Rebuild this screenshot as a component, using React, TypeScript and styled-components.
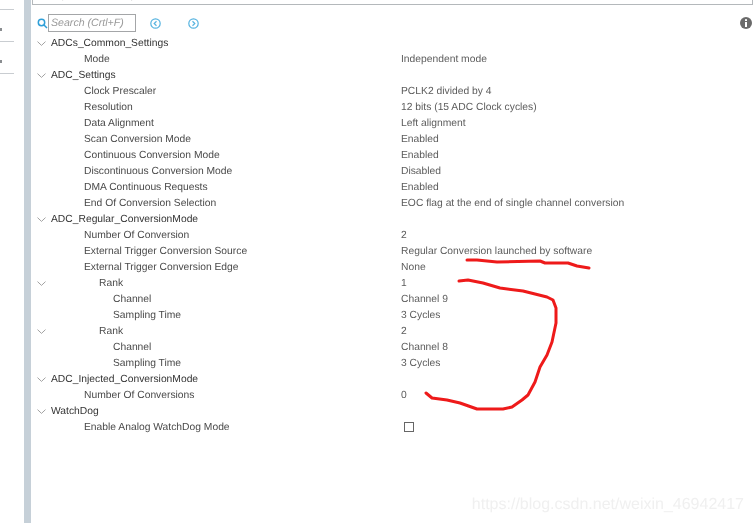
import React from "react";
import styled, { createGlobalStyle } from "styled-components";

const Global = createGlobalStyle`
  html, body { margin: 0; padding: 0; background: #fff; }
  #root { width: 753px; height: 523px; overflow: hidden; }
`;

const Page = styled.div`
  position: relative;
  display: flex;
  width: 753px;
  height: 523px;
  overflow: hidden;
  background: #fff;
  font-family: "Liberation Sans", Arial, sans-serif;
  font-size: 10.3px;
  text-rendering: geometricPrecision;
  color: #4a4a4a;
  filter: blur(0.3px);
`;

const Side = styled.div`
  width: 24px;
  flex: none;
  display: flex;
  flex-direction: column;
  padding-top: 9px;
`;

const SideCell = styled.div<{ $first?: boolean }>`
  width: 14px;
  height: 31px;
  border-top: ${(p) => (p.$first ? "1px solid #c9cdd1" : "0")};
  border-bottom: 1px solid #c9cdd1;
  display: flex;
  align-items: center;
`;

const Dot = styled.span`
  width: 2px;
  height: 3px;
  margin-top: 7px;
  background: #8a8d90;
`;

const Divider = styled.div`
  width: 7px;
  flex: none;
  background: #c6d0d8;
`;

const Main = styled.div`
  flex: 1;
  min-width: 0;
  display: flex;
  flex-direction: column;
`;

const Header = styled.div`
  height: 5px;
  margin-left: 1px;
  border: 1px solid #b4b8bb;
  border-top: 0;
  box-sizing: border-box;
  overflow: hidden;
  color: #8a8a8a;
  line-height: 12px;
`;

const HeaderText = styled.div`
  margin-top: -10px;
  padding-left: 3px;
  white-space: nowrap;
`;

const SearchBar = styled.div`
  display: flex;
  align-items: center;
  height: 18px;
  margin-top: 9px;
  padding-left: 6px;
  position: relative;
`;

const SearchBox = styled.div`
  width: 88px;
  height: 18px;
  box-sizing: border-box;
  border: 1px solid #a4a6a8;
  color: #9a9a9a;
  font-style: italic;
  font-size: 10.6px;
  line-height: 16px;
  padding-left: 2px;
`;

const NavButton = styled.svg<{ $gap: number }>`
  width: 11px;
  height: 11px;
  margin-left: ${(p) => p.$gap}px;
  flex: none;
`;

const InfoIcon = styled.svg`
  position: absolute;
  left: 709px;
  top: 3px;
  width: 12px;
  height: 12px;
`;

const Tree = styled.div`
  display: flex;
  flex-direction: column;
  margin-top: 4px;
`;

const RowLine = styled.div`
  height: 16px;
  display: flex;
  align-items: center;
  position: relative;
  line-height: 16px;
`;

const Chevron = styled.svg`
  position: absolute;
  left: 6px;
  top: 5px;
  width: 9px;
  height: 5px;
`;

const Label = styled.span<{ $indent: number; $dark: boolean }>`
  width: 370px;
  flex: none;
  box-sizing: border-box;
  padding-left: ${(p) => p.$indent}px;
  color: ${(p) => (p.$dark ? "#333" : "#4a4a4a")};
  white-space: nowrap;
`;

const Value = styled.span`
  color: #5c5c5c;
  white-space: nowrap;
`;

const CheckBox = styled.span`
  width: 10px;
  height: 10px;
  margin-left: 3px;
  margin-bottom: 2px;
  box-sizing: border-box;
  border: 1px solid #666;
  background: #fff;
`;

const Scribble = styled.svg`
  position: absolute;
  left: 0;
  top: 0;
  width: 753px;
  height: 523px;
  pointer-events: none;
`;

const Watermark = styled.div`
  position: absolute;
  right: 9px;
  top: 495px;
  font-size: 16px;
  line-height: 20px;
  color: #f0f0f0;
  white-space: nowrap;
`;

type Row = { label: string; level: number; value?: string; open?: boolean; check?: boolean };

const rows: Row[] = [
  { label: "ADCs_Common_Settings", level: 0, open: true },
  { label: "Mode", level: 1, value: "Independent mode" },
  { label: "ADC_Settings", level: 0, open: true },
  { label: "Clock Prescaler", level: 1, value: "PCLK2 divided by 4" },
  { label: "Resolution", level: 1, value: "12 bits (15 ADC Clock cycles)" },
  { label: "Data Alignment", level: 1, value: "Left alignment" },
  { label: "Scan Conversion Mode", level: 1, value: "Enabled" },
  { label: "Continuous Conversion Mode", level: 1, value: "Enabled" },
  { label: "Discontinuous Conversion Mode", level: 1, value: "Disabled" },
  { label: "DMA Continuous Requests", level: 1, value: "Enabled" },
  { label: "End Of Conversion Selection", level: 1, value: "EOC flag at the end of single channel conversion" },
  { label: "ADC_Regular_ConversionMode", level: 0, open: true },
  { label: "Number Of Conversion", level: 1, value: "2" },
  { label: "External Trigger Conversion Source", level: 1, value: "Regular Conversion launched by software" },
  { label: "External Trigger Conversion Edge", level: 1, value: "None" },
  { label: "Rank", level: 2, value: "1", open: true },
  { label: "Channel", level: 3, value: "Channel 9" },
  { label: "Sampling Time", level: 3, value: "3 Cycles" },
  { label: "Rank", level: 2, value: "2", open: true },
  { label: "Channel", level: 3, value: "Channel 8" },
  { label: "Sampling Time", level: 3, value: "3 Cycles" },
  { label: "ADC_Injected_ConversionMode", level: 0, open: true },
  { label: "Number Of Conversions", level: 1, value: "0" },
  { label: "WatchDog", level: 0, open: true },
  { label: "Enable Analog WatchDog Mode", level: 1, check: true },
];

const indents = [20, 53, 68, 82];

const Nav = ({ dir, gap }: { dir: "l" | "r"; gap: number }) => (
  <NavButton $gap={gap} viewBox="0 0 11 11" fill="none" stroke="#58b4e0" strokeWidth="1.2">
    <circle cx="5.5" cy="5.5" r="4.7" />
    <path d={dir === "l" ? "M6.5 3.3 4.2 5.5l2.3 2.2" : "M4.5 3.3l2.3 2.2-2.3 2.2"} />
  </NavButton>
);

export default function App() {
  return (
    <Page>
      <Global />
      <Side>
        <SideCell $first><Dot /></SideCell>
        <SideCell><Dot /></SideCell>
      </Side>
      <Divider />
      <Main>
        <Header>
          <HeaderText>Configure the below parameters :</HeaderText>
        </Header>
        <SearchBar>
          <svg width="11" height="11" viewBox="0 0 11 11" fill="none" stroke="#2f9fd8" strokeWidth="1.5">
            <circle cx="4.5" cy="4.5" r="3.2" />
            <path d="M7 7l3 3" />
          </svg>
          <SearchBox>Search (Crtl+F)</SearchBox>
          <Nav dir="l" gap={14} />
          <Nav dir="r" gap={27} />
          <InfoIcon viewBox="0 0 12 12">
            <circle cx="6" cy="6" r="6" fill="#6a6a6a" />
            <rect x="5" y="5" width="2" height="5" fill="#fff" />
            <rect x="5" y="2.2" width="2" height="1.8" fill="#fff" />
          </InfoIcon>
        </SearchBar>
        <Tree>
          {rows.map((r, i) => (
            <RowLine key={i}>
              {r.open && (
                <Chevron viewBox="0 0 9 5" fill="none" stroke="#a2a2a2" strokeWidth="1">
                  <path d="M.5.6 4.5 4.4 8.5.6" />
                </Chevron>
              )}
              <Label $indent={indents[r.level]} $dark={r.level === 0}>{r.label}</Label>
              {r.value && <Value>{r.value}</Value>}
              {r.check && <CheckBox />}
            </RowLine>
          ))}
        </Tree>
      </Main>
      <Scribble viewBox="0 0 753 523" fill="none" stroke="#ee1a1a" strokeWidth="3" strokeLinecap="round" strokeLinejoin="round">
        <path d="M467 260 477 260 497 262 540 261 545 263 568 263 577 266 589 268" />
        <path d="M459 281 468 280 483 283 500 288 523 291 547 297 553 300 556 308 556 323 552 342 547 355 540 367 535 382 528 395 522 400 512 407 503 409 477 409 460 403 447 400 432 398 426 393" />
      </Scribble>
      <Watermark>https://blog.csdn.net/weixin_46942417</Watermark>
    </Page>
  );
}
